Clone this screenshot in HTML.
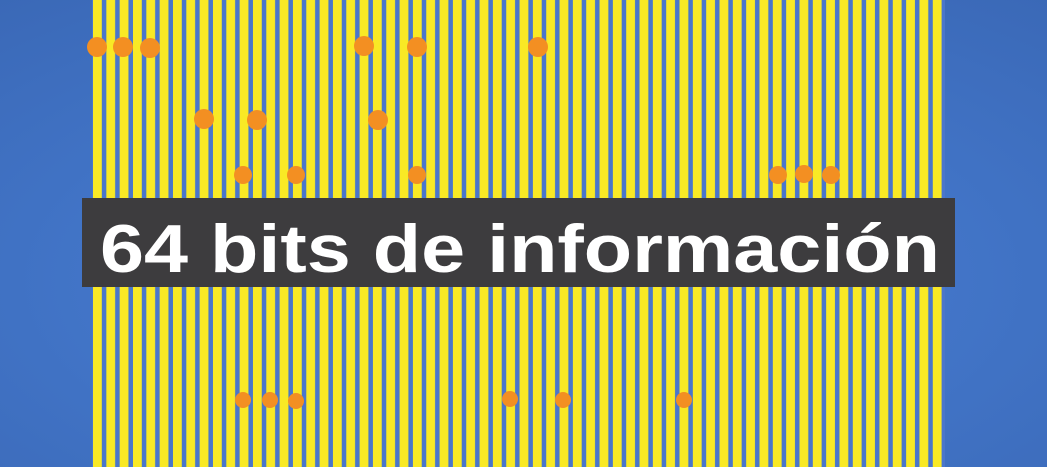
<!DOCTYPE html>
<html><head><meta charset="utf-8"><style>
html,body{margin:0;padding:0;width:1047px;height:467px;overflow:hidden}
</style></head><body>
<svg width="1047" height="467" xmlns="http://www.w3.org/2000/svg">
<defs>
<radialGradient id="bg" cx="0.5" cy="0.6" r="0.8">
<stop offset="0" stop-color="#4a82da"/><stop offset="1" stop-color="#3a68b6"/>
</radialGradient>
<pattern id="st" x="93" y="0" width="13.33" height="467" patternUnits="userSpaceOnUse">
<rect width="13.33" height="467" fill="#4a76cc"/>
<rect width="8.8" height="467" fill="#f9e925"/>
</pattern>
</defs>
<rect width="1047" height="467" fill="url(#bg)"/>
<rect x="92" y="0" width="853" height="467" fill="url(#st)"/>
<g fill="#f38f22">
<circle cx="97" cy="47" r="10"/><circle cx="123" cy="47" r="10"/><circle cx="150" cy="48" r="10"/>
<circle cx="364" cy="46" r="10"/><circle cx="417" cy="47" r="10"/><circle cx="538" cy="47" r="10"/>
<circle cx="204" cy="119" r="10"/><circle cx="257" cy="120" r="10"/><circle cx="378" cy="120" r="10"/>
<circle cx="243" cy="175" r="9"/><circle cx="296" cy="175" r="9"/><circle cx="417" cy="175" r="9"/>
<circle cx="778" cy="175" r="9"/><circle cx="804" cy="174" r="9"/><circle cx="831" cy="175" r="9"/>
<circle cx="243" cy="400" r="8"/><circle cx="270" cy="400" r="8"/><circle cx="296" cy="401" r="8"/>
<circle cx="510" cy="399" r="8"/><circle cx="563" cy="400" r="8"/><circle cx="684" cy="400" r="8"/>
</g>
<rect x="82" y="198" width="873" height="89" fill="#3d3c3e"/>
<text x="100" y="272" font-family="Liberation Sans, sans-serif" font-weight="bold" font-size="68" fill="#fff" textLength="840" lengthAdjust="spacingAndGlyphs">64 bits de información</text>
</svg>
</body></html>
